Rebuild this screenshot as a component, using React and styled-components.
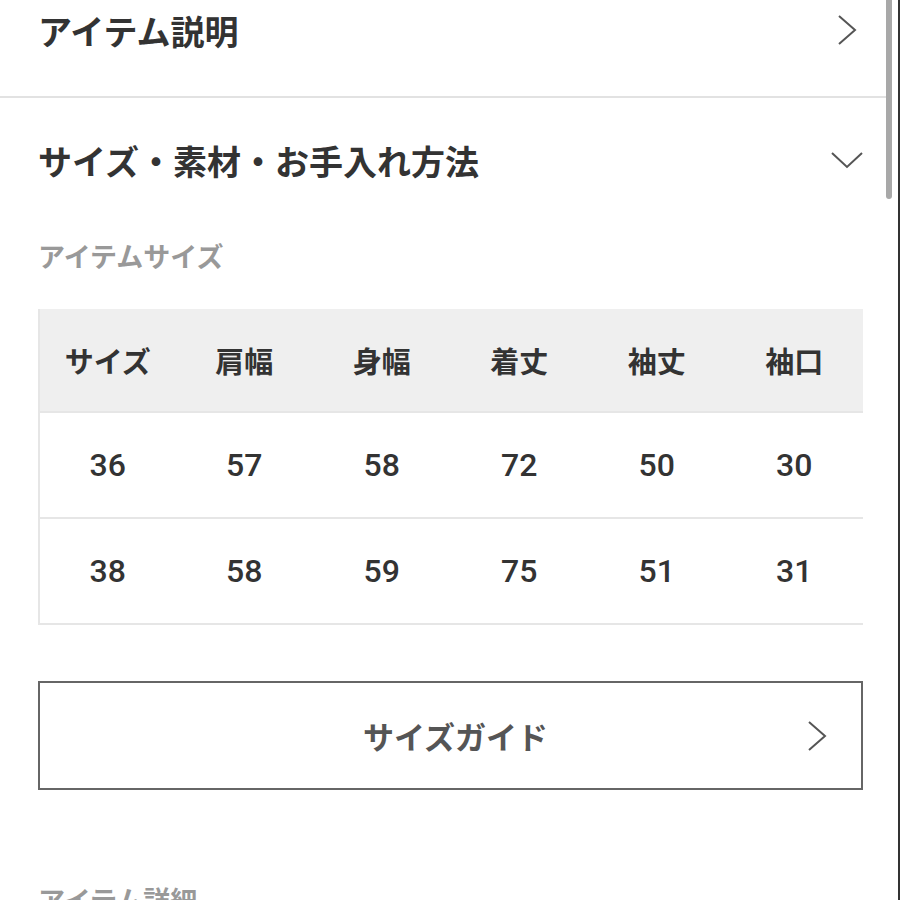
import styled, { createGlobalStyle } from "styled-components";

const GlobalStyle = createGlobalStyle`
  html, body {
    margin: 0;
    padding: 0;
    background: #fff;
    overflow: hidden;
  }
  body {
    font-family: "Noto Sans CJK JP", "Noto Sans", sans-serif;
    color: #333;
  }
`;

const Page = styled.div`
  display: flex;
  width: 900px;
  height: 900px;
  overflow: hidden;
`;

const Content = styled.div`
  width: 886px;
  flex-shrink: 0;
`;

const ScrollRail = styled.div`
  flex: 1;
  border-right: 2px solid #333;
`;

const Thumb = styled.div`
  width: 6px;
  height: 199px;
  background: #a8a8a8;
  border-radius: 0 0 3px 3px;
`;

const AccordionHead = styled.div`
  display: flex;
  align-items: center;
  justify-content: space-between;
  height: ${(p) => p.h}px;
  padding: 0 ${(p) => p.pr}px ${(p) => p.pb || 0}px 38px;
  border-bottom: ${(p) => (p.divider ? "2px solid #e2e2e2" : "none")};
`;

const HeadTitle = styled.h2`
  margin: 0;
  font-size: 34px;
  font-weight: 700;
  color: #333;
`;

const Body = styled.div`
  padding: 0 23px 0 38px;
`;

const Label = styled.div`
  font-size: 27px;
  font-weight: 700;
  color: #999;
  line-height: 36px;
  margin-top: ${(p) => p.mt}px;
`;

const Table = styled.div`
  margin-top: 35px;
  display: grid;
  grid-template-columns: repeat(6, 1fr);
`;

const Cell = styled.div`
  height: ${(p) => (p.head ? 104 : 106)}px;
  display: flex;
  align-items: center;
  justify-content: center;
  box-sizing: border-box;
  background: ${(p) => (p.head ? "#efefef" : "#fff")};
  border-bottom: 2px solid #e6e6e6;
  border-left: ${(p) => (p.first ? "2px solid #e6e6e6" : "none")};
  font-size: ${(p) => (p.head ? "29px" : "32px")};
  font-weight: ${(p) => (p.head ? 700 : 500)};
  font-family: ${(p) =>
    p.head ? `"Noto Sans CJK JP", sans-serif` : `Roboto, "Liberation Sans", sans-serif`};
  color: #333;
`;

const GuideButton = styled.button`
  margin-top: 56px;
  width: 100%;
  height: 109px;
  display: flex;
  align-items: center;
  justify-content: center;
  position: relative;
  background: #fff;
  border: 2px solid #666;
  font-family: "Noto Sans CJK JP", sans-serif;
  font-size: 31px;
  font-weight: 700;
  color: #555;
  padding: 0 0 0 10px;
  cursor: pointer;
`;

const ButtonArrow = styled.span`
  position: absolute;
  right: 34px;
  top: 50%;
  transform: translateY(-50%);
  display: flex;
`;

const ChevronRight = ({ w = 20, h = 30 }) => (
  <svg width={w} height={h} viewBox="0 0 20 30" fill="none">
    <path d="M2 1 L18 15 L2 29" stroke="#555" strokeWidth="2" />
  </svg>
);

const ChevronDown = () => (
  <svg width="32" height="18" viewBox="0 0 32 18" fill="none">
    <path d="M1 2 L16 16 L31 2" stroke="#555" strokeWidth="2" />
  </svg>
);

const headers = ["サイズ", "肩幅", "身幅", "着丈", "袖丈", "袖口"];
const rows = [
  ["36", "57", "58", "72", "50", "30"],
  ["38", "58", "59", "75", "51", "31"],
];

const App = () => {
  return (
    <Page>
      <GlobalStyle />
      <Content>
        <AccordionHead h={60} pb={36} pr={29} divider>
          <HeadTitle>アイテム説明</HeadTitle>
          <ChevronRight />
        </AccordionHead>
        <AccordionHead h={124} pr={23}>
          <HeadTitle>サイズ・素材・お手入れ方法</HeadTitle>
          <ChevronDown />
        </AccordionHead>
        <Body>
          <Label mt={16}>アイテムサイズ</Label>
          <Table>
            {headers.map((h, i) => (
              <Cell key={h} head first={i === 0}>
                {h}
              </Cell>
            ))}
            {rows.map((r, ri) =>
              r.map((v, i) => (
                <Cell key={ri + "-" + i} first={i === 0}>
                  {v}
                </Cell>
              ))
            )}
          </Table>
          <GuideButton>
            サイズガイド
            <ButtonArrow>
              <ChevronRight />
            </ButtonArrow>
          </GuideButton>
          <Label mt={92}>アイテム詳細</Label>
        </Body>
      </Content>
      <ScrollRail>
        <Thumb />
      </ScrollRail>
    </Page>
  );
};

export default App;
